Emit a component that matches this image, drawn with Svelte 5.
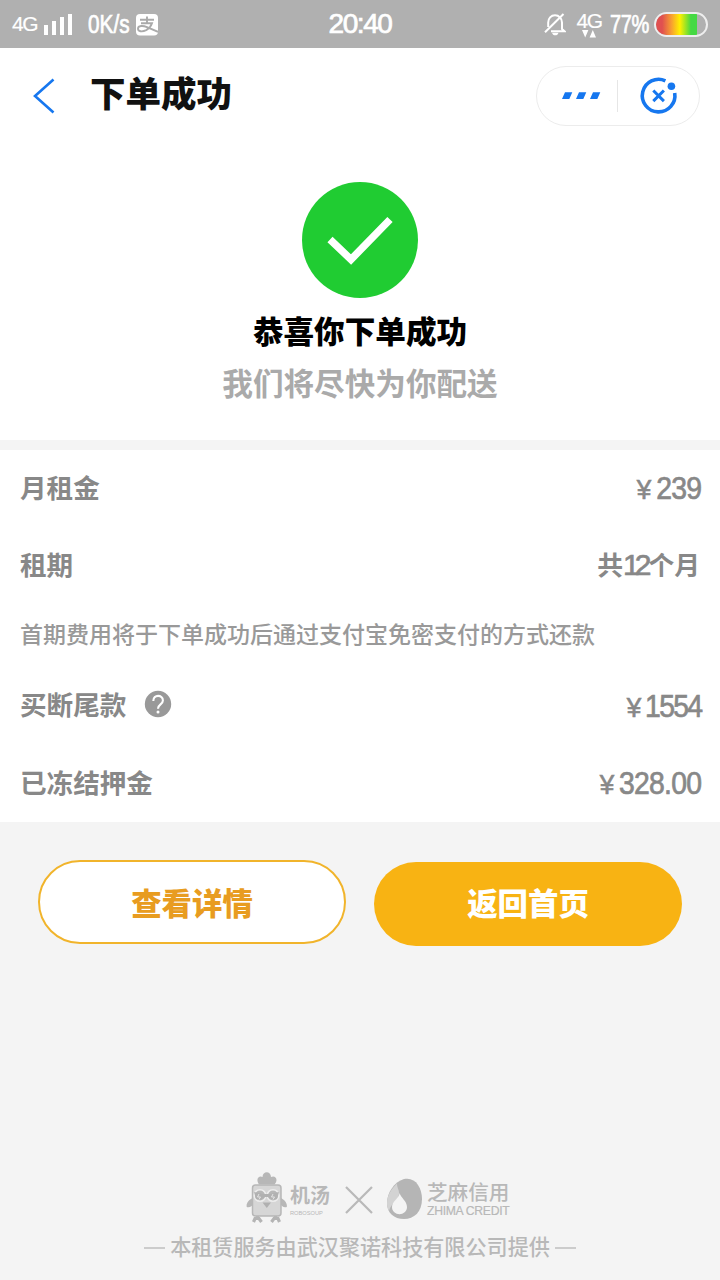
<script lang="ts">
	type Row = { label: string; value: string; currency?: boolean; help?: boolean; tight?: boolean };

	const terms: Row[] = [
		{ label: '月租金', value: '239', currency: true },
		{ label: '租期', value: '12' }
	];
	const amounts: Row[] = [
		{ label: '买断尾款', value: '1554', currency: true, help: true, tight: true },
		{ label: '已冻结押金', value: '328.00', currency: true }
	];
	const bars = [10, 14, 18, 21];
</script>

{#snippet detail(row: Row)}
	<div class="row" class:with-help={row.help}>
		<span class="label">{row.label}</span>
		{#if row.help}
			<svg class="help" width="28" height="28" viewBox="0 0 28 28">
				<circle cx="14" cy="14" r="13.2" fill="#999" />
				<path
					d="M9.3 11c0-7 9.6-6.5 9.6-.5 0 4-4.9 3.8-4.9 8.2"
					fill="none"
					stroke="#fff"
					stroke-width="2.1"
				/>
				<circle cx="14" cy="22" r="1.5" fill="#fff" />
			</svg>
		{/if}
		{#if row.currency}
			<span class="value" class:tight={row.tight}><span class="yen">¥</span>{row.value}</span>
		{:else}
			<span class="value period">共<span class="count">{row.value}</span>个月</span>
		{/if}
	</div>
{/snippet}

<div class="page">
	<div class="status">
		<div class="status-left">
			<span class="network">4G</span>
			<div class="signal">
				{#each bars as height}
					<i style="height: {height}px"></i>
				{/each}
			</div>
			<span class="speed">0K/s</span>
			<svg class="alipay" width="22" height="22" viewBox="0 0 22 22">
				<rect width="22" height="21.5" rx="4" fill="#fff" />
				<path
					d="M4 5.8h14M11 2.5v6.8M5 9.3h11c-1 3-3.2 5.4-5.8 6.8C6 18.2 2 17.5 2 14.7c0-3.4 5.2-3.3 9-1.6l11 4.8"
					fill="none"
					stroke="#aaa"
					stroke-width="1.9"
				/>
			</svg>
		</div>
		<span class="clock">20:40</span>
		<div class="status-right">
			<svg class="muted" width="22" height="24" viewBox="0 0 22 24">
				<path
					d="M4.2 15V10.5C4.2 6.4 7 3.3 11 3.3s7 3.1 7 7.2V17l2.5 2.2H7M19.5 2L1 20.3"
					fill="none"
					stroke="#fff"
					stroke-width="2"
				/>
				<path d="M8 20.8h6.5c-.6 3.4-5.9 3.4-6.5 0z" fill="#fff" />
			</svg>
			<div class="data">
				<span>4G</span>
				<svg width="16" height="8" viewBox="0 0 16 8">
					<path d="M1 0h6.4L4.2 7.5zM8.6 7.5H15L11.8 0z" fill="#fff" />
				</svg>
			</div>
			<span class="percent">77%</span>
			<div class="battery"><div class="charge" style="width: 82%"></div></div>
		</div>
	</div>

	<header>
		<svg class="back" width="24" height="36" viewBox="0 0 24 36">
			<path d="M21.5 1.5L3 18l18.5 16.5" fill="none" stroke="#1677ef" stroke-width="2.6" />
		</svg>
		<h1>下单成功</h1>
		<div class="capsule">
			<svg width="164" height="60" viewBox="0 0 164 60">
				<path
					d="M29 26.3h7.3l-3 6.7H26zM43 26.3h7.3l-3 6.7H40zM57 26.3h7.3l-3 6.7H54z"
					fill="#1677ef"
				/>
				<path d="M81.5 14v32" stroke="#e6e6e6" />
				<path
					d="M129.4 14.8A16.3 16.3 0 1 0 138.7 27"
					fill="none"
					stroke="#1677ef"
					stroke-width="3.6"
				/>
				<circle cx="135.4" cy="20.3" r="3.8" fill="#1677ef" />
				<path d="M117.3 24.5l10.6 10.6M127.9 24.5l-10.6 10.6" stroke="#1677ef" stroke-width="3" />
			</svg>
		</div>
	</header>

	<section class="result">
		<svg width="116" height="116" viewBox="0 0 116 116">
			<circle cx="58" cy="58" r="58" fill="#20cc32" />
			<path d="M28 57.5l21 20L88 37.5" fill="none" stroke="#fff" stroke-width="7.4" />
		</svg>
		<h2>恭喜你下单成功</h2>
		<p>我们将尽快为你配送</p>
	</section>

	<section class="details">
		{#each terms as row}
			{@render detail(row)}
		{/each}
		<p class="note">首期费用将于下单成功后通过支付宝免密支付的方式还款</p>
		{#each amounts as row}
			{@render detail(row)}
		{/each}
	</section>

	<div class="actions">
		<button class="outline" type="button">查看详情</button>
		<button class="solid" type="button">返回首页</button>
	</div>

	<footer>
		<div class="brands">
			<svg class="robot" width="42" height="52" viewBox="0 0 42 52">
				<path
					d="M13 12.5c-4-6 .5-9.500 3.500-7.500C16.500-1.500 25-1.500 25 5c4-2 8 2 3.500 7.500z"
					fill="#b7b7b7"
				/>
				<path d="M6.500 26C3 28 0 31 .7 35c3 1 5.500-1 6.500-3zM35 26c3.500 2 6.500 5 5.800 9-3 1-5.300-1-6.300-3z" fill="#b7b7b7" />
				<path
					d="M11.500 43v4M29.500 43v4M7.500 50l1.500-3.500h4l2.500 3.500M25.500 50l2.500-3.500h4l1.500 3.500"
					fill="none"
					stroke="#b4b4b4"
					stroke-width="3.2"
				/>
				<rect x="6.500" y="13" width="28.500" height="31" rx="3" fill="#d6d6d6" stroke="#b7b7b7" stroke-width="1.500" />
				<g fill="#b7b7b7" stroke="#ededed" stroke-width="1.500">
					<circle cx="14" cy="23.500" r="5.800" />
					<circle cx="27" cy="23.500" r="5.800" />
				</g>
				<path d="M8 20l9 2h7l9-2-2 7-4 1-5-3h-3l-5 3-4-1z" fill="#b1b1b1" />
				<path d="M13 22l-1.500 3h3L13 27.500M27 22l-1.500 3h3L27 27.500" fill="none" stroke="#e4e4e4" />
				<path d="M16.500 30.500h8.500l-4.200 5.500z" fill="#b0b0b0" />
			</svg>
			<div class="robosoup">
				<strong>机汤</strong>
				<small>ROBOSOUP</small>
			</div>
			<svg class="cross" width="28" height="28" viewBox="0 0 28 28">
				<path d="M1 1l26 26M27 1L1 27" stroke="#b9b9b9" stroke-width="2.2" />
			</svg>
			<svg class="drop" width="36" height="42" viewBox="0 0 36 42">
				<path d="M17 1C7 4 0 15 0 25c0 10 7 16 17 16s18-7 18-20C35 9 28-1.500 17 1z" fill="#b5b5b5" />
				<path d="M10 5.500C4 11 0 18 0 25c0 3 .6 6 2 8 2-8 9-10 10-17 .4-4-2-6-2-10.500z" fill="#d3d3d3" />
				<path d="M12.500 15c0 5-7.500 8-7.500 14 0 9.500 15 9.500 15 0 0-6-6-9-7.500-14z" fill="#f4f4f4" />
			</svg>
			<div class="zhima">
				<span>芝麻信用</span>
				<small>ZHIMA CREDIT</small>
			</div>
		</div>
		<div class="provider"><i></i><span>本租赁服务由武汉聚诺科技有限公司提供</span><i></i></div>
	</footer>
</div>

<style>
	:global(body) {
		margin: 0;
	}

	.page {
		display: flex;
		flex-direction: column;
		width: 720px;
		height: 1280px;
		overflow: hidden;
		background: #f4f4f4;
		font-family: 'Liberation Sans', 'Noto Sans CJK SC', sans-serif;
		white-space: nowrap;
	}

	svg {
		display: block;
		flex: none;
	}

	h1,
	h2,
	p {
		margin: 0;
	}

	.status {
		display: grid;
		grid-template-columns: 1fr auto 1fr;
		align-items: center;
		height: 48px;
		background: #b0b0b0;
		color: #fff;
	}

	.status-left,
	.status-right {
		display: flex;
		align-items: center;
	}

	.status-left {
		padding-left: 12px;
	}

	.network {
		width: 32px;
		font-size: 21px;
		letter-spacing: -1.5px;
		-webkit-text-stroke: 0.2px #fff;
	}

	.signal {
		display: flex;
		align-items: flex-end;
		gap: 4px;
		width: 44px;
		height: 21px;
	}

	.signal i {
		width: 4px;
		background: #fff;
	}

	.speed {
		width: 48px;
		font-size: 25px;
		transform: scaleX(0.83);
		transform-origin: left;
		-webkit-text-stroke: 0.7px #fff;
	}

	.alipay {
		margin-top: 1px;
	}

	.clock {
		font-size: 28px;
		letter-spacing: -1.4px;
		-webkit-text-stroke: 0.7px #fff;
	}

	.status-right {
		justify-content: flex-end;
		padding-right: 12px;
	}

	.muted {
		margin-right: 10px;
	}

	.data {
		display: flex;
		flex-direction: column;
		align-items: center;
		width: 26px;
		margin-right: 8px;
		font-size: 21px;
		line-height: 19px;
		letter-spacing: -1.5px;
		-webkit-text-stroke: 0.2px #fff;
	}

	.percent {
		width: 44px;
		font-size: 25px;
		letter-spacing: -0.5px;
		transform: scaleX(0.8);
		transform-origin: left;
		-webkit-text-stroke: 0.7px #fff;
	}

	.battery {
		box-sizing: border-box;
		width: 54px;
		height: 25px;
		overflow: hidden;
		border: 2px solid #eee;
		border-radius: 13px;
	}

	.charge {
		height: 100%;
		background: linear-gradient(90deg, #e05050 15%, #f8a030 38%, #fff000 58%, #45d943 85%);
	}

	header {
		display: flex;
		align-items: center;
		box-sizing: border-box;
		height: 96px;
		padding: 0 20px 0 32px;
		background: #fff;
	}

	.back {
		margin-right: 34px;
	}

	h1 {
		margin-top: -3px;
		font-size: 35.5px;
		font-weight: 900;
		line-height: 50px;
		color: #111;
	}

	.capsule {
		box-sizing: border-box;
		width: 164px;
		height: 60px;
		margin-left: auto;
		border: 1px solid #ececec;
		border-radius: 30px;
	}

	.capsule svg {
		margin: -1px;
	}

	.result {
		display: flex;
		flex-direction: column;
		align-items: center;
		box-sizing: border-box;
		height: 296px;
		padding-top: 38px;
		background: #fff;
	}

	h2 {
		margin-top: 11px;
		font-size: 30.6px;
		font-weight: 900;
		line-height: 46px;
		color: #000;
	}

	.result p {
		margin-top: 6px;
		font-size: 30.6px;
		font-weight: 700;
		line-height: 46px;
		color: #aaa;
	}

	.details {
		box-sizing: border-box;
		height: 372px;
		margin-top: 10px;
		padding: 0 20px;
		background: #fff;
	}

	.row {
		display: flex;
		align-items: center;
		height: 77px;
		color: #888;
	}

	.with-help {
		height: 79px;
	}

	.label {
		font-size: 26.6px;
		font-weight: 700;
		line-height: 40px;
	}

	.help {
		margin: -4px 0 0 18px;
	}

	.value {
		margin-left: auto;
		margin-right: -1px;
		font-size: 30.5px;
		line-height: 40px;
		letter-spacing: -0.8px;
		transform: scaleX(0.93);
		transform-origin: right;
		-webkit-text-stroke: 0.7px #888;
	}

	.tight {
		padding-top: 2px;
		letter-spacing: -1.8px;
	}

	.yen {
		margin-right: 6px;
		font-size: 28px;
	}

	.period {
		margin-right: 0;
		font-size: 25.8px;
		font-weight: 700;
		letter-spacing: 0;
		transform: none;
		-webkit-text-stroke: 0;
	}

	.count {
		margin-right: 2px;
		font-size: 30px;
		font-weight: 400;
		letter-spacing: -5px;
		-webkit-text-stroke: 0.7px #888;
	}

	.note {
		height: 62px;
		font-size: 23px;
		font-weight: 500;
		line-height: 62px;
		color: #999;
	}

	.actions {
		display: flex;
		gap: 28px;
		padding: 38px 38px 0;
	}

	button {
		box-sizing: border-box;
		width: 308px;
		height: 84px;
		padding: 0;
		border: 0;
		border-radius: 42px;
		font-family: inherit;
		font-size: 30.4px;
		font-weight: 900;
		line-height: 80px;
	}

	.outline {
		padding-top: 2px;
		border: 2px solid #f1b42b;
		background: #fff;
		color: #e89c20;
	}

	.solid {
		margin-top: 2px;
		background: #f8b313;
		color: #fff;
	}

	footer {
		display: flex;
		flex-direction: column;
		align-items: center;
		margin-top: auto;
		padding-bottom: 16px;
		color: #b8b8b8;
	}

	.brands {
		display: flex;
		align-items: center;
		width: 264px;
		height: 54px;
		margin-left: 36px;
	}

	.robot {
		margin-top: -2px;
	}

	.robosoup {
		display: flex;
		flex-direction: column;
		width: 40px;
		margin-left: 2px;
	}

	.robosoup strong {
		font-size: 20px;
		line-height: 27px;
	}

	.robosoup small {
		font-size: 5.7px;
		line-height: 6px;
	}

	.cross {
		margin: 2px 14px 0 15px;
	}

	.zhima {
		display: flex;
		flex-direction: column;
		margin-left: 4px;
	}

	.zhima span {
		font-size: 20.6px;
		line-height: 24px;
		font-weight: 500;
	}

	.zhima small {
		font-size: 12.2px;
		line-height: 12px;
		letter-spacing: -0.3px;
		-webkit-text-stroke: 0.2px #b8b8b8;
	}

	.provider {
		display: flex;
		align-items: center;
		gap: 5px;
		margin-top: 6px;
		font-size: 21.1px;
		font-weight: 500;
		line-height: 32px;
	}

	.provider i {
		width: 21px;
		height: 2px;
		background: #ccc;
	}
</style>
